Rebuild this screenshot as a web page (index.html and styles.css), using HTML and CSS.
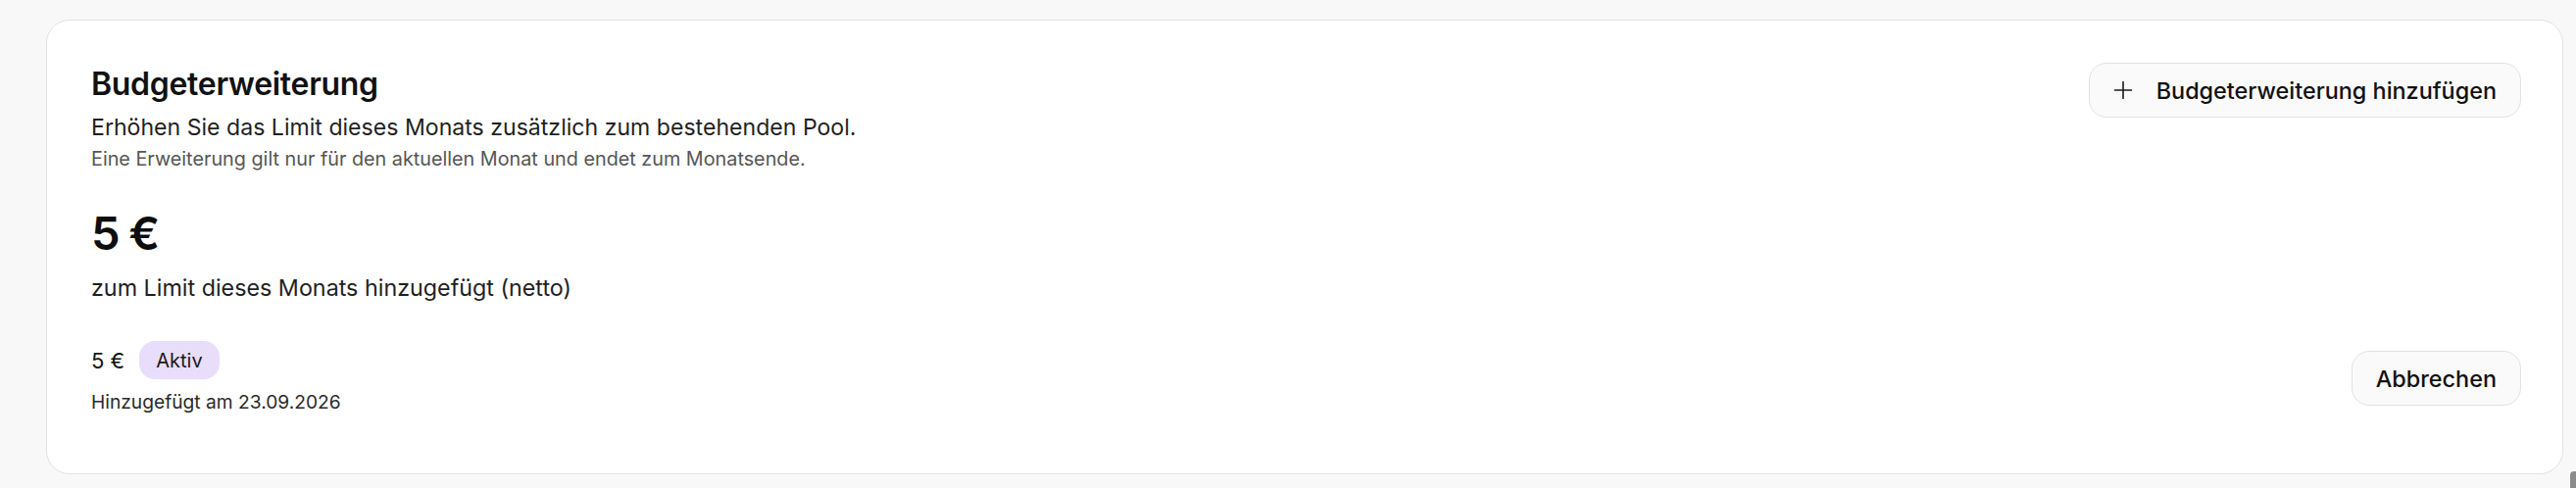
FILE: index.html
```html
<!DOCTYPE html>
<html lang="de">
<head>
<meta charset="utf-8">
<title>Budgeterweiterung</title>
<link rel="stylesheet" href="styles.css">
</head>
<body>
<main class="page">
  <section class="card">
    <header class="card-head">
      <div class="intro">
        <h2 class="title">Budgeterweiterung</h2>
        <p class="subtitle">Erhöhen Sie das Limit dieses Monats zusätzlich zum bestehenden Pool.</p>
        <p class="hint">Eine Erweiterung gilt nur für den aktuellen Monat und endet zum Monatsende.</p>
      </div>
      <button class="btn btn-add" type="button">
        <svg class="plus" viewBox="0 0 20 20" width="20" height="20" aria-hidden="true">
          <path d="M10 1.5v17M1.5 10h17" stroke="#1a1a1a" stroke-width="1.6" fill="none" stroke-linecap="round"/>
        </svg>
        <span>Budgeterweiterung hinzufügen</span>
      </button>
    </header>
    <div class="total">
      <div class="amount">5 €</div>
      <div class="caption">zum Limit dieses Monats hinzugefügt (netto)</div>
    </div>
    <div class="entry">
      <div class="entry-info">
        <div class="entry-top">
          <span class="entry-amount">5 €</span>
          <span class="badge">Aktiv</span>
        </div>
        <div class="entry-date">Hinzugefügt am 23.09.2026</div>
      </div>
      <button class="btn btn-cancel" type="button">Abbrechen</button>
    </div>
  </section>
  <div class="scroll-thumb"></div>
</main>
</body>
</html>
```

FILE: styles.css
```css
* { box-sizing: border-box; }

html, body {
  margin: 0;
  padding: 0;
  background: #f8f8f8;
}

body {
  font-family: "Inter", "Noto Sans", "Liberation Sans", sans-serif;
  color: #141414;
}

.page {
  position: relative;
  height: 498px;
  padding: 20px 13px 0 47px;
}

.card {
  background: #ffffff;
  border: 1px solid #e2e2e2;
  border-radius: 24px;
  padding: 43px 42px 59px 45px;
  display: flex;
  flex-direction: column;
}

.card-head {
  display: flex;
  justify-content: space-between;
  align-items: flex-start;
}

.title {
  margin: 4px 0 0;
  font-size: 32px;
  line-height: 36px;
  font-weight: 600;
  letter-spacing: -0.3px;
  color: #111111;
}

.subtitle {
  margin: 11px 0 0;
  font-size: 23.1px;
  line-height: 30px;
  color: #1f1f1f;
}

.hint {
  margin: 4px 0 0;
  font-size: 19.8px;
  line-height: 26px;
  color: #555555;
}

.btn {
  font-family: inherit;
  display: inline-flex;
  align-items: center;
  height: 56px;
  padding: 0 24px;
  background: #fafafa;
  border: 1px solid #e2e2e2;
  border-radius: 18px;
  font-size: 23.4px;
  font-weight: 500;
  color: #111111;
  cursor: pointer;
}

.btn-add {
  gap: 24px;
}

.plus {
  display: block;
  width: 20px;
  height: 20px;
}

.total {
  margin-top: 35px;
  display: flex;
  flex-direction: column;
}

.amount {
  font-size: 47px;
  line-height: 56px;
  font-weight: 600;
  letter-spacing: -1.6px;
  color: #0d0d0d;
}

.caption {
  margin-top: 14px;
  font-size: 23.3px;
  line-height: 28px;
  color: #1f1f1f;
}

.entry {
  margin-top: 40px;
  display: flex;
  justify-content: space-between;
  align-items: center;
}

.entry-top {
  display: flex;
  align-items: center;
  gap: 15px;
}

.entry-amount {
  font-size: 22px;
  color: #111111;
}

.badge {
  display: inline-flex;
  align-items: center;
  height: 39px;
  padding: 0 17px;
  border-radius: 16px;
  background: #e9ddfc;
  font-size: 20px;
  color: #1a1a1a;
}

.entry-date {
  margin-top: 9px;
  font-size: 19.2px;
  line-height: 28px;
  color: #2a2a2a;
}

.scroll-thumb {
  position: absolute;
  right: 0;
  top: 481px;
  width: 6px;
  height: 20px;
  border-radius: 4px 0 0 0;
  background: #8c8c8c;
}
```
